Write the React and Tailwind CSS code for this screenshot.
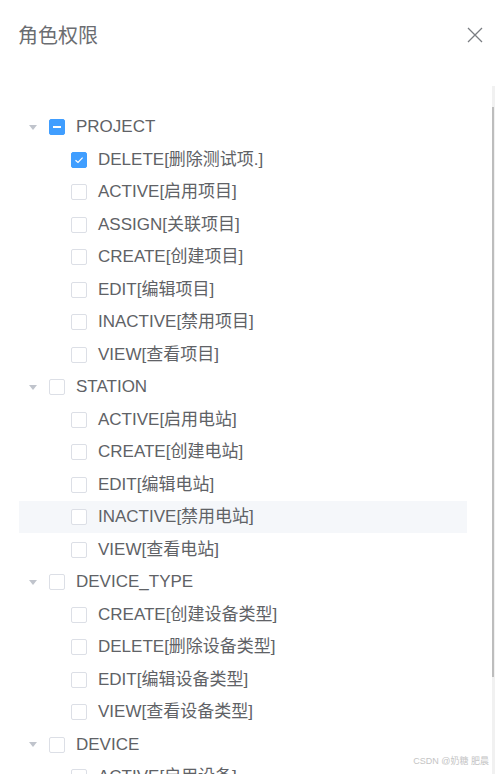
import { useState } from 'react';

const permissionTree = [
  {
    key: 'PROJECT',
    children: [
      'DELETE[删除测试项.]',
      'ACTIVE[启用项目]',
      'ASSIGN[关联项目]',
      'CREATE[创建项目]',
      'EDIT[编辑项目]',
      'INACTIVE[禁用项目]',
      'VIEW[查看项目]',
    ],
  },
  {
    key: 'STATION',
    children: ['ACTIVE[启用电站]', 'CREATE[创建电站]', 'EDIT[编辑电站]', 'INACTIVE[禁用电站]', 'VIEW[查看电站]'],
  },
  {
    key: 'DEVICE_TYPE',
    children: ['CREATE[创建设备类型]', 'DELETE[删除设备类型]', 'EDIT[编辑设备类型]', 'VIEW[查看设备类型]'],
  },
  {
    key: 'DEVICE',
    children: ['ACTIVE[启用设备]'],
  },
];

const Checkbox = ({ state }) => {
  if (state === 'checked') {
    return (
      <span className="flex items-center justify-center w-4 h-4 shrink-0 rounded-[2px] bg-[#409eff] border border-[#409eff]">
        <svg width="10" height="8" viewBox="0 0 10 8" fill="none">
          <path d="M1.5 4.2 L4 6.4 L8.6 1.6" stroke="white" strokeWidth="1.2" />
        </svg>
      </span>
    );
  }
  if (state === 'indeterminate') {
    return (
      <span className="flex items-center justify-center w-4 h-4 shrink-0 rounded-[2px] bg-[#409eff] border border-[#409eff]">
        <span className="block w-2 h-[2px] bg-white" />
      </span>
    );
  }
  return <span className="block w-4 h-4 shrink-0 rounded-[2px] bg-white border border-[#dcdfe6]" />;
};

const Caret = () => (
  <svg width="8" height="5" viewBox="0 0 8 5">
    <polygon points="0,0 8,0 4,5" fill="#c0c4cc" />
  </svg>
);

const App = () => {
  const [checked] = useState({ PROJECT: ['DELETE[删除测试项.]'] });
  const hovered = 'STATION/INACTIVE[禁用电站]';

  return (
    <div
      className="relative w-[495px] h-[774px] overflow-hidden bg-white flex flex-col"
      style={{ fontFamily: '"Liberation Sans", "Noto Sans CJK SC", sans-serif' }}
    >
      {/* Dialog header */}
      <div className="flex items-center justify-between h-[70px] pl-[18px] pr-[12px] shrink-0">
        <span className="text-[20px] leading-none text-[#6b6d71]" style={{ fontFamily: '"Noto Sans CJK SC", sans-serif' }}>
          角色权限
        </span>
        <svg width="16" height="16" viewBox="0 0 16 16">
          <path d="M1 1 L15 15 M15 1 L1 15" stroke="#7a7d82" strokeWidth="1.3" />
        </svg>
      </div>

      {/* Scroll area */}
      <div className="flex flex-1 mt-[16px] min-h-0">
        <div className="w-[448px] ml-[19px] pt-[24.75px]">
          {permissionTree.map((group) => {
            const groupChecked = checked[group.key] || [];
            const groupState =
              groupChecked.length === 0
                ? 'none'
                : groupChecked.length === group.children.length
                ? 'checked'
                : 'indeterminate';
            return (
              <div key={group.key}>
                <div className="flex items-center h-[32.5px] text-[17px] text-[#606266]">
                  <span className="flex items-center justify-center w-[26px] pl-[1px]">
                    <Caret />
                  </span>
                  <span className="ml-[4px]">
                    <Checkbox state={groupState} />
                  </span>
                  <span className="ml-[11px] whitespace-nowrap">{group.key}</span>
                </div>
                {group.children.map((label) => {
                  const isHovered = hovered === `${group.key}/${label}`;
                  return (
                    <div
                      key={label}
                      className={`flex items-center h-[32.5px] text-[17px] text-[#606266] pl-[52px] ${
                        isHovered ? 'bg-[#f5f7fa]' : ''
                      }`}
                    >
                      <Checkbox state={groupChecked.includes(label) ? 'checked' : 'none'} />
                      <span className="ml-[11px] whitespace-nowrap">{label}</span>
                    </div>
                  );
                })}
              </div>
            );
          })}
        </div>
        <div className="flex-1" />
        {/* Scrollbar */}
        <div className="w-[3px] bg-[#f1f1f1] pt-[21px] shrink-0">
          <div className="w-[1.5px] h-[570px] bg-[#bdbdbd]" />
        </div>
      </div>

      {/* Watermark */}
      <span className="absolute right-[6px] bottom-[8px] text-[9px] leading-none text-[#c4c4c4]">
        CSDN @奶糖 肥晨
      </span>
    </div>
  );
};

export default App;
